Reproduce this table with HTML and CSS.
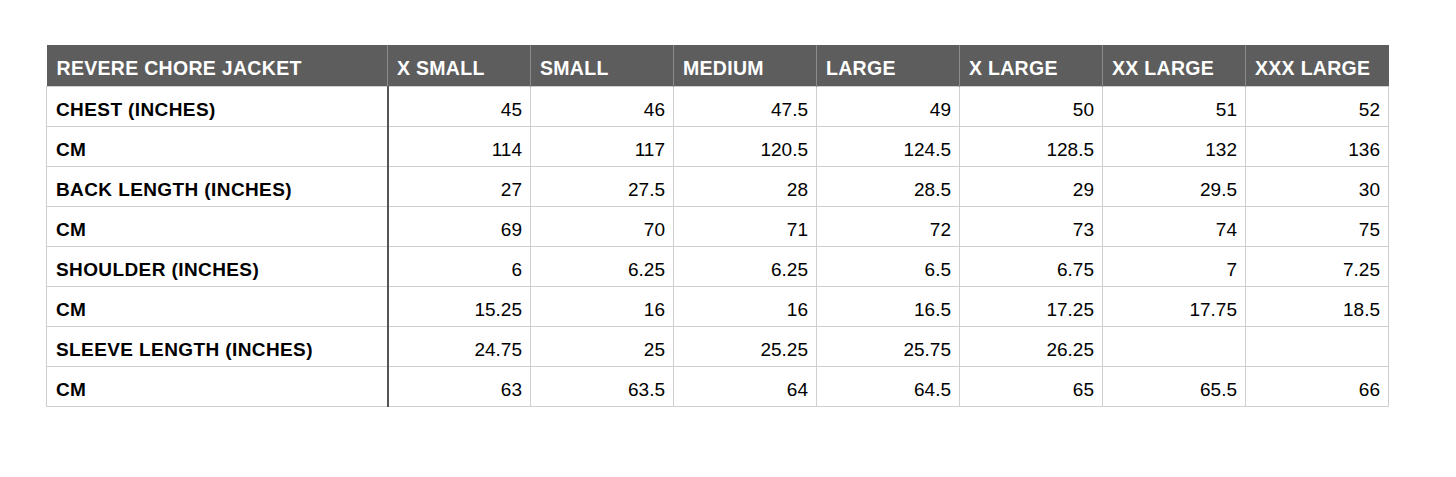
FILE: index.html
```html
<!DOCTYPE html>
<html>
<head>
<meta charset="utf-8">
<link rel="stylesheet" href="styles.css">
</head>
<body>
<div class="wrap">
<table class="sizes">
  <colgroup>
    <col class="c-label">
    <col class="c-size"><col class="c-size"><col class="c-size"><col class="c-size"><col class="c-size"><col class="c-size"><col class="c-size">
  </colgroup>
  <thead>
    <tr>
      <th class="lbl">REVERE CHORE JACKET</th>
      <th>X SMALL</th><th>SMALL</th><th>MEDIUM</th><th>LARGE</th><th>X LARGE</th><th>XX LARGE</th><th>XXX LARGE</th>
    </tr>
  </thead>
  <tbody>
    <tr><td class="lbl">CHEST (INCHES)</td><td>45</td><td>46</td><td>47.5</td><td>49</td><td>50</td><td>51</td><td>52</td></tr>
    <tr><td class="lbl">CM</td><td>114</td><td>117</td><td>120.5</td><td>124.5</td><td>128.5</td><td>132</td><td>136</td></tr>
    <tr><td class="lbl">BACK LENGTH (INCHES)</td><td>27</td><td>27.5</td><td>28</td><td>28.5</td><td>29</td><td>29.5</td><td>30</td></tr>
    <tr><td class="lbl">CM</td><td>69</td><td>70</td><td>71</td><td>72</td><td>73</td><td>74</td><td>75</td></tr>
    <tr><td class="lbl">SHOULDER (INCHES)</td><td>6</td><td>6.25</td><td>6.25</td><td>6.5</td><td>6.75</td><td>7</td><td>7.25</td></tr>
    <tr><td class="lbl">CM</td><td>15.25</td><td>16</td><td>16</td><td>16.5</td><td>17.25</td><td>17.75</td><td>18.5</td></tr>
    <tr><td class="lbl">SLEEVE LENGTH (INCHES)</td><td>24.75</td><td>25</td><td>25.25</td><td>25.75</td><td>26.25</td><td></td><td></td></tr>
    <tr><td class="lbl">CM</td><td>63</td><td>63.5</td><td>64</td><td>64.5</td><td>65</td><td>65.5</td><td>66</td></tr>
  </tbody>
</table>
</div>
</body>
</html>
```
FILE: styles.css
```css
html, body {
  margin: 0;
  padding: 0;
  background: #ffffff;
}
body {
  font-family: "Liberation Sans", Arial, sans-serif;
  color: #000;
}
.wrap {
  padding: 45px 0 0 46px;
}
.sizes {
  border-collapse: collapse;
  table-layout: fixed;
  width: 1341px;
}
.c-label { width: 341px; }
.c-size { width: 143px; }
.sizes th {
  background: #5d5d5d;
  color: #fff;
  font-weight: bold;
  font-size: 19.5px;
  text-align: left;
  height: 41px;
  padding: 6px 8px 0 9px;
  box-sizing: border-box;
  border-left: 1px solid #8a8a8a;
  white-space: nowrap;
  letter-spacing: 0.3px;
  vertical-align: middle;
}
.sizes th:first-child { border-left: none; padding-left: 10px; }
.sizes td {
  height: 40px;
  box-sizing: border-box;
  font-size: 19px;
  text-align: right;
  padding: 8px 8px 0 8px;
  border: 1px solid #cfcfcf;
  white-space: nowrap;
  vertical-align: middle;
}
.sizes td.lbl {
  text-align: left;
  font-weight: bold;
  padding-left: 9px;
  border-right: 2px solid #555;
  letter-spacing: 0.4px;
}
```
